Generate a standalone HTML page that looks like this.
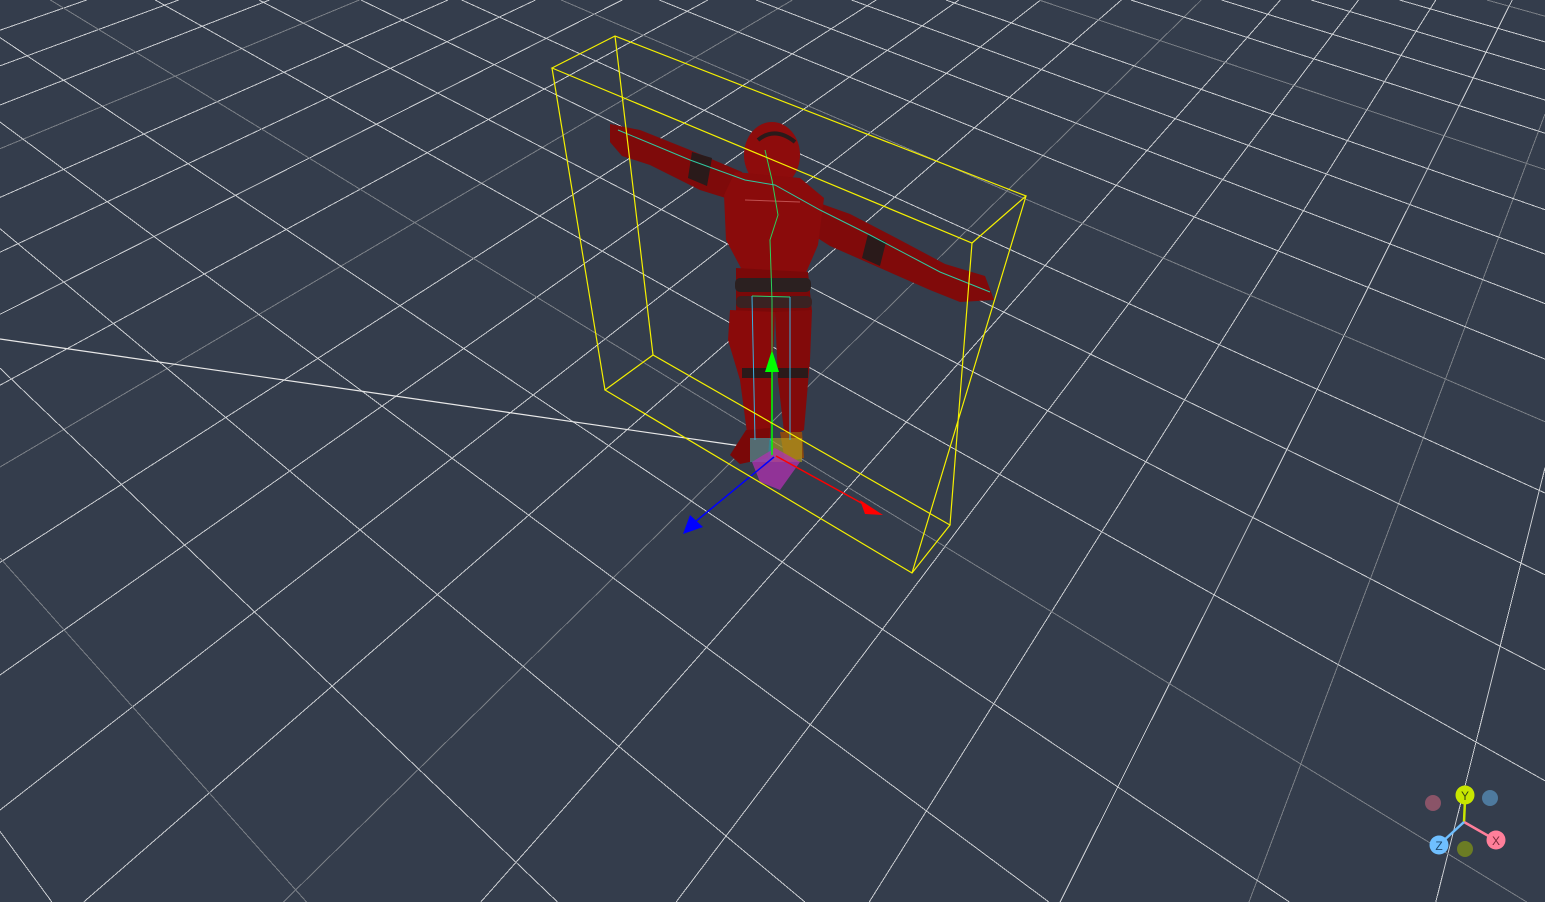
<!DOCTYPE html>
<html><head><meta charset="utf-8"><style>
html,body{margin:0;padding:0;background:#343d4c;overflow:hidden;width:1545px;height:902px}
svg{display:block;overflow:hidden}
</style></head><body>
<svg id="s" width="1545" height="902" viewBox="0 0 1545 902" xmlns="http://www.w3.org/2000/svg">
<rect width="1545" height="902" fill="#343d4c"/>
<g id="grid" stroke-width="1" shape-rendering="crispEdges"></g>
<line x1="0" y1="339" x2="748" y2="447" stroke="#e8e8e8" stroke-width="1.2"/>
<g>
<path d="M610,124 L640,130 L690,150 L742,172 L748,205 L700,190 L650,165 L622,156 L610,142Z" fill="#7e0a0a"/>
<path d="M805,198 L850,214 L900,240 L945,264 L985,276 L994,300 L960,302 L930,290 L880,268 L830,246 L805,230Z" fill="#800a0a"/>
<path d="M692,152 L712,158 L707,186 L688,178Z" fill="#2a1a1a"/>
<path d="M868,234 L886,242 L880,266 L862,258Z" fill="#2a1a1a"/>
<ellipse cx="772" cy="155" rx="28" ry="33" fill="#8e0c0c"/>
<path d="M758,140 Q775,126 795,142" stroke="#2a1a1a" stroke-width="4" fill="none"/>
<path d="M735,172 L800,178 L824,198 L818,245 L805,275 L742,270 L726,240 L724,195Z" fill="#8a0b0b"/>
<path d="M745,200 L800,202" stroke="#c05050" stroke-width="1"/>
<path d="M736,268 L808,272 L812,312 L736,312Z" fill="#7a0909"/>
<rect x="735" y="278" width="76" height="14" rx="5" fill="#2b2020"/>
<rect x="736" y="296" width="76" height="12" rx="5" fill="#3a2222"/>
<path d="M730,310 L775,312 L772,380 L770,440 L748,440 L740,380 L728,340Z" fill="#8a0a0a"/>
<path d="M775,312 L812,310 L810,360 L804,430 L785,440 L778,380Z" fill="#820a0a"/>
<rect x="742" y="368" width="30" height="10" fill="#2a1a1a"/>
<rect x="778" y="368" width="30" height="10" fill="#2a1a1a"/>
<path d="M746,430 L770,428 L768,458 L740,464 L730,455Z" fill="#7a0808"/>
<path d="M780,432 L802,432 L804,458 L785,462Z" fill="#8a4a10"/>
<rect x="750" y="438" width="22" height="24" fill="#3aaeb8" opacity="0.6"/>
<rect x="772" y="438" width="30" height="24" fill="#b4a020" opacity="0.6"/>
<path d="M752,462 L775,448 L800,462 L780,490 L760,482Z" fill="#b030b0" opacity="0.75"/>
<g stroke-width="1" fill="none">
<path d="M772,455 L772,300 L770,240 L778,215 L772,180 L765,150" stroke="#2bd15a"/>
<path d="M618,130 L690,160 L745,180 L775,185 L820,210 L870,235 L940,272 L990,292" stroke="#30c8a0"/>
<path d="M752,296 L755,440 M790,297 L790,440" stroke="#3ab0e0"/>
<path d="M752,296 L790,297" stroke="#30d070"/>
</g>
<line x1="772" y1="455" x2="772" y2="372" stroke="#00ff00" stroke-width="1.5"/>
<path d="M772,350 L765,372 L779,372Z" fill="#00ff00"/>
<line x1="774" y1="457" x2="695" y2="522" stroke="#0000ff" stroke-width="1.5"/>
<path d="M683,534 L690,515 L703,527Z" fill="#0000ff"/>
<line x1="776" y1="456" x2="865" y2="505" stroke="#ff0000" stroke-width="1.5"/>
<path d="M883,515 L860,500 L865,514Z" fill="#ff0000"/>
</g>
<g stroke="#f5f000" stroke-width="1.2" fill="none">
<path d="M552,68 L615,36 L1026,196 L972,243 Z"/>
<path d="M605,390 L653,355 L950,525 L912,573 Z"/>
<path d="M552,68 L605,390 M615,36 L653,355 M972,243 L950,525 M1026,196 L912,573"/>
</g>
<g font-family="Liberation Sans, sans-serif" font-size="12" text-anchor="middle">
<circle cx="1433" cy="803" r="8" fill="#8a5468"/>
<circle cx="1490" cy="798" r="8" fill="#4e7a9e"/>
<circle cx="1465" cy="849" r="8" fill="#6b7c24"/>
<line x1="1464" y1="822" x2="1465" y2="800" stroke="#c8e600" stroke-width="2.5"/>
<line x1="1464" y1="822" x2="1492" y2="838" stroke="#ff7f9a" stroke-width="2.5"/>
<line x1="1464" y1="822" x2="1441" y2="843" stroke="#6fbfff" stroke-width="2.5"/>
<circle cx="1465" cy="795" r="9.5" fill="#c8e600"/>
<text x="1465" y="800" fill="#3a4a10">Y</text>
<circle cx="1496" cy="840" r="9.5" fill="#ff7f9a"/>
<text x="1496" y="845" fill="#7a2a3a">X</text>
<circle cx="1439" cy="845" r="9.5" fill="#6fbfff"/>
<text x="1439" y="850" fill="#1e4a70">Z</text>
</g>
</svg>
<script>
(function(){
var a=0.06057,b=0.08399,V1=[-1151,-734],V2=[1814,-602],O=[726,836];
function P(u,v){var d=a*u+b*v+1;return [(a*u*V1[0]+b*v*V2[0]+O[0])/d,(a*u*V1[1]+b*v*V2[1]+O[1])/d];}
function clip(p,q){ // Liang-Barsky to frame
  var x0=p[0],y0=p[1],dx=q[0]-x0,dy=q[1]-y0,t0=0,t1=1;
  var P_=[-dx,dx,-dy,dy],Q_=[x0,1545-x0,y0,902-y0];
  for(var i=0;i<4;i++){if(P_[i]==0){if(Q_[i]<0)return null;}else{var r=Q_[i]/P_[i];if(P_[i]<0){if(r>t1)return null;if(r>t0)t0=r;}else{if(r<t0)return null;if(r<t1)t1=r;}}}
  return [[x0+t0*dx,y0+t0*dy],[x0+t1*dx,y0+t1*dy]];
}
var g=document.getElementById('grid'),h='';
function seg(p,q,c){var r=clip(p,q);if(!r)return;h+='<line x1="'+r[0][0].toFixed(1)+'" y1="'+r[0][1].toFixed(1)+'" x2="'+r[1][0].toFixed(1)+'" y2="'+r[1][1].toFixed(1)+'" stroke="'+c+'"/>';}
for(var u=-40;u<=60;u++){
  var vmin=(0.05-1-a*u)/b;
  var c=(((u-2)%5)+5)%5==0?'#7a7f86':'#c9ccd0';
  seg(P(u,vmin),P(u,2000),c);
}
for(var v=-40;v<=60;v++){
  var umin=(0.05-1-b*v)/a;
  var c2=(((v+2)%5)+5)%5==0?'#7a7f86':'#c9ccd0';
  seg(P(umin,v),P(2000,v),c2);
}
g.innerHTML=h;
})();
</script>
</body></html>
